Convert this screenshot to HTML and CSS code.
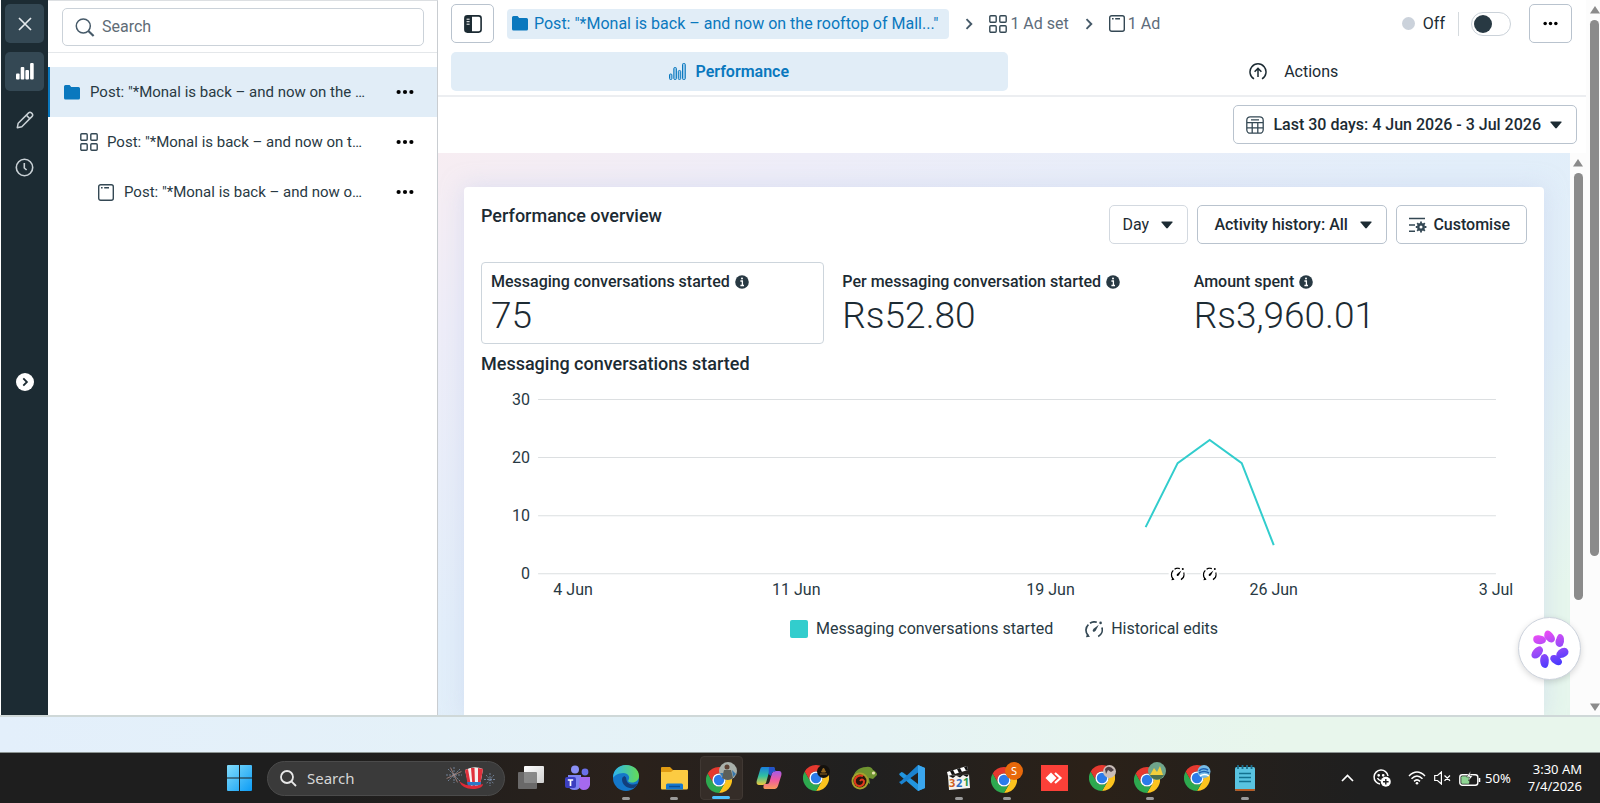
FILE: index.html
```html
<!DOCTYPE html>
<html lang="en">
<head>
<meta charset="utf-8">
<title>Ads Manager – Performance</title>
<link rel="stylesheet" href="styles.css">
</head>
<body>
<svg class="defs" aria-hidden="true">
  <symbol id="i-dots" viewBox="0 0 18 6"><circle cx="2.6" cy="3" r="2.1"/><circle cx="9" cy="3" r="2.1"/><circle cx="15.4" cy="3" r="2.1"/></symbol>
  <symbol id="i-folder" viewBox="0 0 16 15"><path d="M1.5 0H5.6L7.2 2H14.5Q16 2 16 3.5V13Q16 14.5 14.5 14.5H1.5Q0 14.5 0 13V1.5Q0 0 1.5 0z" fill="currentColor"/></symbol>
  <symbol id="i-grid" viewBox="0 0 18 18"><g fill="none" stroke="currentColor" stroke-width="1.4"><rect x=".8" y=".8" width="6.4" height="6.4" rx="1"/><rect x="10.8" y=".8" width="6.4" height="6.4" rx="1"/><rect x=".8" y="10.8" width="6.4" height="6.4" rx="1"/><rect x="10.8" y="10.8" width="6.4" height="6.4" rx="1"/></g></symbol>
  <symbol id="i-ad" viewBox="0 0 16 17"><rect x=".7" y=".7" width="14.6" height="15.6" rx="2" fill="none" stroke="currentColor" stroke-width="1.4"/><path d="M3 3.8H4.6M6.2 3.8H11" stroke="currentColor" stroke-width="1.5"/></symbol>
  <symbol id="i-caret" viewBox="0 0 12 8"><path d="M1 .5H11Q12 .5 11.4 1.4L6.8 7Q6 7.8 5.2 7L.6 1.4Q0 .5 1 .5z" fill="currentColor"/></symbol>
  <symbol id="i-info" viewBox="0 0 14 14"><circle cx="7" cy="7" r="6.8" fill="#283943"/><path d="M5.4 6H7.4V10.4M5.4 10.5H9" stroke="#fff" stroke-width="1.3" fill="none"/><circle cx="7" cy="3.6" r="1" fill="#fff"/></symbol>
  <symbol id="i-chev" viewBox="0 0 8 12"><path d="M1.5 1.2L6.3 6L1.5 10.8" fill="none" stroke="#465a69" stroke-width="1.9"/></symbol>
  <symbol id="i-edit" viewBox="0 0 18 17"><g fill="none" stroke="currentColor" stroke-width="1.7"><path d="M3.2 14.6A7.6 7.6 0 0 1 3.4 3.6"/><path d="M5 2.2A7.6 7.6 0 0 1 11.8 1.3"/><path d="M16.9 6.4A7.6 7.6 0 0 1 13.2 15.4"/></g><path d="M13.8 3.8L10.8 9.600Q9.400 11.400 8 10.600Q7 9.200 8.600 7.800z" fill="currentColor"/><path d="M1 16.200L2.200 12.200L5 15.800z" fill="currentColor"/><circle cx="15.600" cy="1.900" r="1.300" fill="currentColor"/></symbol>
  <symbol id="i-up" viewBox="0 0 10 8"><path d="M5 0L10 7.5H0z" fill="#8b8b8b"/></symbol>
  <symbol id="i-down" viewBox="0 0 10 8"><path d="M0 .5H10L5 8z" fill="#8b8b8b"/></symbol>
  <symbol id="i-chrome" viewBox="0 0 26 26"><path d="M13 6.5H24.26A13 13 0 0 1 13 26L18.63 16.25A6.5 6.5 0 0 0 13 6.5z" fill="#fcc31e"/><path d="M13 6.5H24.26A13 13 0 0 1 13 26L18.63 16.25A6.5 6.5 0 0 0 13 6.5z" fill="#2da94f" transform="rotate(120 13 13)"/><path d="M13 6.5H24.26A13 13 0 0 1 13 26L18.63 16.25A6.5 6.5 0 0 0 13 6.5z" fill="#e5392f" transform="rotate(240 13 13)"/><circle cx="13" cy="13" r="6.6" fill="#fff"/><circle cx="13" cy="13" r="5.2" fill="#2b7bea"/></symbol>
</svg>

<div class="workspace">
  <nav class="rail" aria-label="Tools">
    <button class="rail-btn on" aria-label="Close"><svg width="16" height="16" viewBox="0 0 16 16"><path d="M2 2L14 14M14 2L2 14" stroke="#e4e9ec" stroke-width="1.7"/></svg></button>
    <button class="rail-btn on" aria-label="Charts"><svg width="18" height="17" viewBox="0 0 18 17"><g fill="#fff"><rect x="0" y="10.5" width="3.6" height="6" rx="1"/><rect x="4.7" y="4" width="3.6" height="12.5" rx="1"/><rect x="9.4" y="7" width="3.6" height="9.5" rx="1"/><rect x="14.1" y="0" width="3.6" height="16.5" rx="1"/></g></svg></button>
    <button class="rail-btn" aria-label="Edit"><svg width="18" height="18" viewBox="0 0 18 18" fill="none" stroke="#c9d1d6" stroke-width="1.5" stroke-linejoin="round"><path d="M1.3 16.7L2.2 12.2L12.6 1.9Q14 .7 15.4 1.9L16.1 2.6Q17.3 4 16.1 5.4L5.8 15.8z"/><path d="M10.4 4.2L13.8 7.6"/></svg></button>
    <button class="rail-btn" aria-label="History"><svg width="19" height="19" viewBox="0 0 19 19" fill="none" stroke="#c9d1d6" stroke-width="1.6"><circle cx="9.5" cy="9.5" r="8.2"/><path d="M9.3 5V10L11.6 12"/></svg></button>
    <button class="expand" aria-label="Expand"><svg width="18" height="18" viewBox="0 0 18 18"><circle cx="9" cy="9" r="9" fill="#fff"/><path d="M7.3 5.4L10.9 9L7.3 12.6" fill="none" stroke="#1c2b33" stroke-width="1.8"/></svg></button>
  </nav>

  <aside class="tree">
    <div class="tree-top">
      <label class="search"><svg width="20" height="19" viewBox="0 0 20 19" fill="none" stroke="#465a69"><circle cx="8.3" cy="8" r="7" stroke-width="1.5"/><path d="M13.4 13L18.6 18" stroke-width="2.2"/></svg><input type="text" placeholder="Search" aria-label="Search"></label>
    </div>
    <ul class="tree-list">
      <li class="node sel"><a href="#"><svg class="blue" width="16" height="15"><use href="#i-folder"/></svg><span>Post: "*Monal is back – and now on the …</span></a><button aria-label="More"><svg width="18" height="6"><use href="#i-dots"/></svg></button></li>
      <li class="node l2"><a href="#"><svg width="18" height="18"><use href="#i-grid"/></svg><span>Post: "*Monal is back – and now on t…</span></a><button aria-label="More"><svg width="18" height="6"><use href="#i-dots"/></svg></button></li>
      <li class="node l3"><a href="#"><svg width="16" height="17"><use href="#i-ad"/></svg><span>Post: "*Monal is back – and now o…</span></a><button aria-label="More"><svg width="18" height="6"><use href="#i-dots"/></svg></button></li>
    </ul>
  </aside>

  <main class="main">
    <header class="top">
      <div class="crumbs-row">
        <button class="btn icon-btn" aria-label="Toggle panel"><svg width="18" height="18" viewBox="0 0 18 18"><rect x=".9" y=".9" width="16.2" height="16.2" rx="2.5" fill="#fff" stroke="#1c2b33" stroke-width="1.6"/><path d="M3 1H8V17H3Q1 17 1 15V3Q1 1 3 1z" fill="#1c2b33"/><path d="M2.6 4.2H5.6M2.6 6.7H5.6M2.6 9.2H5.6" stroke="#fff" stroke-width="1"/></svg></button>
        <nav class="crumbs" aria-label="Breadcrumb">
          <a class="crumb chip" href="#"><svg width="16" height="15"><use href="#i-folder"/></svg>Post: "*Monal is back – and now on the rooftop of Mall..."</a>
          <svg width="8" height="12"><use href="#i-chev"/></svg>
          <a class="crumb" href="#"><svg class="dark" width="18" height="18"><use href="#i-grid"/></svg>1 Ad set</a>
          <svg width="8" height="12"><use href="#i-chev"/></svg>
          <a class="crumb" href="#"><svg class="dark" width="16" height="17"><use href="#i-ad"/></svg>1 Ad</a>
        </nav>
        <div class="status"><i class="dot"></i><label for="onoff">Off</label><i class="sep"></i><input class="toggle" id="onoff" type="checkbox"></div>
        <button class="btn icon-btn" aria-label="More options"><svg width="15" height="5"><use href="#i-dots"/></svg></button>
      </div>
      <div class="tabs" role="tablist">
        <button class="tab active" role="tab" aria-selected="true"><svg width="17" height="17" viewBox="0 0 17 17" fill="#9cc9ea" stroke="#0a78be" stroke-width="1"><rect x=".5" y="11" width="2.4" height="5.5" rx="1"/><rect x="4.8" y="4.5" width="2.6" height="12" rx="1"/><rect x="9.3" y="7.5" width="2.4" height="9" rx="1"/><rect x="13.5" y=".5" width="2.8" height="16" rx="1"/></svg>Performance</button>
        <button class="tab" role="tab" aria-selected="false"><svg class="act" width="18" height="17" viewBox="0 0 18 17" fill="none" stroke="#1c2b33" stroke-width="1.5"><path d="M5 15.8A8 8 0 1 1 13 15.8"/><path d="M9 14V5.500M5.6 8.8L9 5.4L12.4 8.8"/></svg>Actions</button>
      </div>
    </header>
    <div class="datebar">
      <button class="btn date"><svg width="18" height="18" viewBox="0 0 18 18" fill="none" stroke="#344854" stroke-width="1.3"><rect x=".8" y=".8" width="16.4" height="16.4" rx="3.5"/><path d="M1 6.6H17M1 11.8H17M6.2 6.6V17M11.8 6.6V17M5 3.8H13"/></svg>Last 30 days: 4 Jun 2026 - 3 Jul 2026<svg width="12" height="8"><use href="#i-caret"/></svg></button>
    </div>
    <div class="body">
      <div class="canvas">
        <section class="card">
          <div class="card-head">
            <h2>Performance overview</h2>
            <label class="btn soft"><select aria-label="Interval"><option>Day</option></select><svg width="12" height="8"><use href="#i-caret"/></svg></label>
            <label class="btn wide"><select aria-label="Activity history"><option>Activity history: All</option></select><svg width="12" height="8"><use href="#i-caret"/></svg></label>
            <button class="btn cust"><svg width="18" height="16" viewBox="0 0 18 16" fill="none" stroke="#344854" stroke-width="1.5"><path d="M0 1.5H16M0 8H6M0 14.3H6"/><circle cx="12" cy="10" r="2.7" stroke-width="2.4"/><path d="M12 4.6V6.6M12 13.4V15.4M6.8 10H8.6M15.4 10H17.4M8.2 6.2L9.6 7.6M14.4 12.4L15.8 13.8M15.8 6.2L14.4 7.6M9.6 12.4L8.2 13.8" stroke-width="1.8"/></svg>Customise</button>
          </div>
          <div class="metrics">
            <div class="metric picked"><h3>Messaging conversations started<svg width="14" height="14"><use href="#i-info"/></svg></h3><p>75</p></div>
            <div class="metric"><h3>Per messaging conversation started<svg width="14" height="14"><use href="#i-info"/></svg></h3><p>Rs52.80</p></div>
            <div class="metric"><h3>Amount spent<svg width="14" height="14"><use href="#i-info"/></svg></h3><p>Rs3,960.01</p></div>
          </div>
          <h2 class="chart-title">Messaging conversations started</h2>
          <svg class="chart" viewBox="0 0 1045 226" role="img" aria-label="Messaging conversations started per day">
            <path d="M57 24.5H1014M57 82.5H1014M57 140.5H1014M57 198.5H1014" stroke="#dcdfe1"/>
            <g text-anchor="end"><text x="49" y="30">30</text><text x="49" y="88">20</text><text x="49" y="146">10</text><text x="49" y="204">0</text></g>
            <g text-anchor="middle"><text x="92" y="220">4 Jun</text><text x="315" y="220">11 Jun</text><text x="569" y="220">19 Jun</text><text x="792" y="220">26 Jun</text><text x="1014" y="220">3 Jul</text></g>
            <polyline points="664,152 696,88 728,65 760,88 792,170" fill="none" stroke="#32cdcd" stroke-width="2"/>
            <g color="#000"><rect x="687" y="190" width="18" height="16" fill="#fff"/><rect x="719" y="190" width="18" height="16" fill="#fff"/><use href="#i-edit" x="689" y="192" width="14" height="14"/><use href="#i-edit" x="721" y="192" width="14" height="14"/></g>
          </svg>
          <div class="legend"><span><i class="swatch"></i>Messaging conversations started</span><span><svg class="dark" width="18" height="17"><use href="#i-edit"/></svg>Historical edits</span></div>
        </section>
      </div>
      <div class="scroll inner"><svg width="10" height="8"><use href="#i-up"/></svg><i></i></div>
    </div>
  </main>
  <div class="scroll outer"><svg width="10" height="8"><use href="#i-up"/></svg><i></i><svg width="10" height="8"><use href="#i-down"/></svg></div>
  <button class="fab" aria-label="Assistant"><svg width="38" height="38" viewBox="-19 -19 38 38"><defs><linearGradient id="pet" gradientUnits="userSpaceOnUse" x1="-6" y1="-18" x2="6" y2="18"><stop offset="0" stop-color="#f04cf5"/><stop offset=".5" stop-color="#9a4bf8"/><stop offset="1" stop-color="#4038ff"/></linearGradient></defs><g fill="url(#pet)" stroke="url(#pet)" stroke-width="1.6" stroke-linejoin="round"><path d="M-4-17C-1-20 5-12 4-9C2-5-4-9-5-13Q-5-16-4-17z"/><path d="M9-14C14-15 14-7 12-4C8-1 5-5 7-10Q8-13 9-14z"/><path d="M17 1C20 5 13 9 9 8C5 6 8 2 12 0Q16-1 17 1z"/><path d="M11 14C9 18 2 13 1 10C1 6 6 6 9 9Q12 12 11 14z"/><path d="M-4 18C-9 19-10 11-8 7C-5 4-2 7-2 11Q-2 17-4 18z"/><path d="M-17 8C-20 4-13-2-10-2C-6 0-8 4-11 7Q-15 10-17 8z"/><path d="M-16-10C-16-15-7-13-5-10C-4-6-9-5-13-6Q-16-7-16-10z"/></g></svg></button>
</div>
<div class="strip"></div>

<footer class="taskbar">
  <button class="start" aria-label="Start"><svg width="25" height="26" viewBox="0 0 25 26"><defs><linearGradient id="win" x1="0" y1="0" x2="1" y2="1" gradientUnits="objectBoundingBox"><stop offset="0" stop-color="#82dcfb"/><stop offset="1" stop-color="#0c9cf5"/></linearGradient></defs><path d="M0 1Q0 0 1 0H12V12.4H0zM13 0H24Q25 0 25 1V12.4H13zM0 13.5H12V26H1Q0 26 0 25zM13 13.5H25V25Q25 26 24 26H13z" fill="url(#win)"/></svg></button>
  <label class="tsearch"><svg width="17" height="17" viewBox="0 0 17 17" fill="none" stroke="#e8e8e8" stroke-width="1.8"><circle cx="7" cy="7" r="6"/><path d="M11.4 11.4L16 16"/></svg><input type="text" placeholder="Search" aria-label="Taskbar search">
    <svg width="52" height="24" viewBox="0 0 52 24"><g stroke-width=".8" stroke="#7f93ae"><path d="M9 1V17M1 9H17M3 3L15 15M15 3L3 15" stroke-dasharray="2 1"/><path d="M5.500 1.600L12.500 16.400M1.600 12.500L16.400 5.500" stroke="#b08c84"/><path d="M45 7V20M39 13.500H51M41 9L49 18M49 9L41 18" stroke-dasharray="2 1"/></g><path d="M20 4Q29-1 38 3L35 20H24z" fill="#f4f0f0"/><path d="M20 4L23 3L26 20H23zM26 2H29.500L30 20H27.500zM33 2L38 3L35 20H33z" fill="#e0313c"/><path d="M22 16H36L35.500 19.500H23z" fill="#2b78c5"/><path d="M14 15Q24 23 38 18Q38 22 30 23Q18 24 14 15z" fill="#e02a37"/></svg></label>
  <div class="apps">
    <button aria-label="Task view"><svg width="26" height="26" viewBox="0 0 26 26"><defs><linearGradient id="tv" x1="0" x2="1" y1="0" y2="1"><stop offset="0" stop-color="#fff"/><stop offset="1" stop-color="#cfcfcf"/></linearGradient></defs><rect x="6" y="1" width="20" height="17" rx="1" fill="url(#tv)"/><rect x="0" y="7" width="19" height="17" rx="1" fill="#777" opacity=".85"/></svg></button>
    <button aria-label="Teams"><svg width="26" height="26" viewBox="0 0 26 26"><circle cx="10" cy="4.500" r="4" fill="#8a8ff5"/><circle cx="20" cy="7" r="3.400" fill="#6a70e8"/><path d="M3 10H16V20Q15 25 9.500 25Q4 25 3 20z" fill="#7d83f2"/><path d="M15 12H25V20Q24 25 18.500 25Q15 25 14 21z" fill="#a569ee"/><rect x="0" y="12" width="11" height="11" rx="2" fill="#3b3fc0"/><path d="M2.800 15H8.200M5.500 15V21" stroke="#fff" stroke-width="1.700"/></svg></button>
    <button class="run" aria-label="Edge"><svg width="26" height="26" viewBox="0 0 26 26"><defs><linearGradient id="ed" x1="0" x2="1"><stop offset="0" stop-color="#2cb4f0"/><stop offset="1" stop-color="#65db55"/></linearGradient></defs><circle cx="13" cy="13" r="13" fill="#1477c9"/><path d="M0 13C0 5 6 0 13 0C21 0 26 5 26 11C26 15 23 17.500 19 17.500C16 17.500 14.500 16.500 15.500 15C17.500 12 15 8 10.500 8C5 8 1 11 0 13z" fill="url(#ed)"/><path d="M9 14C9 20 14 24 21 23Q24 21 24.500 18.500C20 21 14 19 13.500 15Q13.500 12 11.500 11Q9 12 9 14z" fill="#123f7c"/></svg></button>
    <button class="run" aria-label="File Explorer"><svg width="28" height="26" viewBox="0 0 28 26"><path d="M1 3Q1 2 2 2H10L13 5H26V12H1z" fill="#e09b12"/><path d="M1 7H11L13.500 5H27Q28 5 28 6V23Q28 24.500 26.500 24.500H2Q1 24.500 1 23z" fill="#fccb42"/><path d="M6 24.500V20Q6 18.500 7.500 18.500H21.500Q23 18.500 23 20V24.500z" fill="#1678cf"/><path d="M9 21.500H20" stroke="#0c4f93" stroke-width="1.500"/></svg></button>
    <button class="run now" aria-label="Chrome, profile 1"><svg width="32" height="32" viewBox="0 0 32 32"><use href="#i-chrome" x="1" y="5" width="26" height="26"/><circle cx="23" cy="9" r="9" fill="#a9b0aa"/><circle cx="22" cy="5" r="2.500" fill="#5e4234"/><path d="M17 16L19 8H26L28 16Q23 20 17 16z" fill="#5d5f58"/><path d="M15 11H18V16zM27 8L31 12L28 15z" fill="#3977aa"/></svg></button>
    <button aria-label="Copilot"><svg width="26" height="24" viewBox="0 0 26 24"><defs><linearGradient id="c1" x1="0" x2="0" y1="0" y2="1"><stop offset="0" stop-color="#1a7fe0"/><stop offset=".5" stop-color="#2fc0a0"/><stop offset="1" stop-color="#f0c93a"/></linearGradient><linearGradient id="c2" x1="0" x2="0" y1="0" y2="1"><stop offset="0" stop-color="#a45be8"/><stop offset=".5" stop-color="#ee5aa0"/><stop offset="1" stop-color="#f79a5a"/></linearGradient></defs><path d="M6 1H17Q19 1 18.500 3L18 6H15Q13 6 12.500 8L10 17Q9 19 7 19H3Q0 19 .7 15L4 4Q4.500 1 6 1z" fill="url(#c1)"/><path d="M20 5H23Q26 5 25.400 9L22 20Q21 23 19 23H9Q7 23 7.500 20L8 18H11Q13 18 13.500 16L16 7Q17 5 20 5z" fill="url(#c2)"/><path d="M13 1H17Q19 1 19 4L20 5Q17 5 16 7L15 10L12.500 8z" fill="#2452c8"/></svg></button>
    <button aria-label="Chrome, profile 2"><svg width="27" height="26" viewBox="0 0 27 26"><use href="#i-chrome" width="26" height="26"/><circle cx="20.500" cy="6.500" r="6.500" fill="#14110d"/><path d="M17 9H24M18.500 7L20.500 3L22.500 7z" stroke="#94661f" fill="#94661f"/></svg></button>
    <button aria-label="Chameleon"><svg width="27" height="24" viewBox="0 0 27 24"><path d="M2 14C2 6 8 1 15 1Q20 0 22 4Q26 6 26 9L22 13L18 12L19 18Q15 16 16 12z" fill="#6f9430"/><circle cx="9" cy="15" r="8.500" fill="#a8a02c"/><circle cx="9" cy="15" r="6.500" fill="#2a150c"/><path d="M9 15Q11 12 13 15Q13 20 8 20Q3 19 4 13Q7 8 12 10" fill="none" stroke="#e23a1c" stroke-width="2"/><circle cx="22.500" cy="7" r="1.600" fill="#e8e3b0"/></svg></button>
    <button aria-label="Visual Studio Code"><svg width="26" height="26" viewBox="0 0 26 26"><path d="M19 0L26 3V23L19 26L1 10.500L0 9L2.500 7L4 7.500L19 19z" fill="#2195df"/><path d="M19 0L2 16L0 17L2.500 19.500L4 18.500L19 7.500z" fill="#1b83d0"/><path d="M19 0L26 3V23L19 26z" fill="#3aa6ee"/></svg></button>
    <button class="run" aria-label="Media Player Classic"><svg width="24" height="26" viewBox="0 0 24 26"><path d="M0 7L20 1L21 5L1 11z" fill="#fff"/><path d="M3 6L6 5L8 9L5 10zM10 4L13 3L15 7L12 8zM17 2L20 1L21 5L19 5.500z" fill="#111"/><path d="M1 11L22 9.500L23 23L2 25z" fill="#f5f3ef"/><path d="M2 11L6 13L9 10.500L13 12.500L16 10L20 12L22 9.500z" fill="#111"/><text x="2" y="22" font-size="11" font-weight="700" fill="#d05f22">3</text><text x="9" y="22" font-size="11" font-weight="700" fill="#2b6fc4">2</text><text x="16" y="21" font-size="11" font-weight="700" fill="#2b9a46">1</text></svg></button>
    <button class="run" aria-label="Chrome, profile S"><svg width="32" height="32" viewBox="0 0 32 32"><use href="#i-chrome" y="5" width="26" height="26"/><circle cx="23" cy="9" r="9" fill="#e8690b"/><text x="23" y="13" font-size="11" text-anchor="middle" fill="#fff">S</text></svg></button>
    <button aria-label="AnyDesk"><svg width="27" height="26" viewBox="0 0 27 26"><rect width="27" height="26" fill="#fb4038"/><path d="M4.500 13L10 7.500L15.500 13L10 18.500z" fill="#fff"/><path d="M14 8L19.500 13L14 18" stroke="#fff" stroke-width="2.200" fill="none"/></svg></button>
    <button aria-label="Chrome, profile 3"><svg width="27" height="26" viewBox="0 0 27 26"><use href="#i-chrome" width="26" height="26"/><circle cx="20.500" cy="6.500" r="6.500" fill="#c9bdb9"/><path d="M16 4Q20-1 25 5L22 7L19 5L17 9z" fill="#4c4044"/></svg></button>
    <button class="run" aria-label="Chrome, profile 4"><svg width="32" height="32" viewBox="0 0 32 32"><use href="#i-chrome" y="5" width="26" height="26"/><circle cx="23" cy="9" r="9" fill="#6fa58c"/><path d="M16 13L20 6L23 10L26 4L29 13z" fill="#f2cf3c"/><path d="M16 13H30Q27 18 22 17.500Q18 17 16 13z" fill="#4a6f50"/></svg></button>
    <button aria-label="Chrome, profile 5"><svg width="27" height="26" viewBox="0 0 27 26"><use href="#i-chrome" width="26" height="26"/><circle cx="20" cy="6.500" r="6.500" fill="#78bce6"/><path d="M15 6Q18 2 24 5M15 8Q20 5 25 8" stroke="#1d63b5" stroke-width="1.600" fill="none"/><path d="M16 11Q21 8 25 11" stroke="#fff" stroke-width="1.500" fill="none"/></svg></button>
    <button class="run" aria-label="Notepad"><svg width="20" height="26" viewBox="0 0 20 26"><rect x="0" y="2" width="20" height="24" rx="1.500" fill="#59c3e0"/><path d="M0 24H20V24.500Q20 26 18.500 26H1.500Q0 26 0 24.500z" fill="#b55a24"/><path d="M3 0V4M7.500 0V4M12 0V4M16.500 0V4" stroke="#1c6e8c" stroke-width="1.800"/><path d="M4 8.500H16M4 12.500H16M4 16.500H16" stroke="#13718f" stroke-width="1.700"/></svg></button>
  </div>
  <div class="tray">
    <button aria-label="Hidden icons"><svg width="13" height="8" viewBox="0 0 13 8"><path d="M1 7L6.500 1.500L12 7" fill="none" stroke="#fff" stroke-width="1.700"/></svg></button>
    <button class="pal" aria-label="Emoji"><svg width="18" height="18" viewBox="0 0 18 18" fill="none" stroke="#fff" stroke-width="1.500"><path d="M7 15A7 7 0 1 1 15 7"/><path d="M4.500 9Q6 12 8 11.500"/><circle cx="5.700" cy="6.300" r=".6" fill="#fff"/><circle cx="10.200" cy="6.300" r=".6" fill="#fff"/><circle cx="12.800" cy="12.800" r="5" fill="#fff" stroke="none"/><path d="M12.800 10V15.600M10 12.800H15.600" stroke="#222" stroke-width="1.400"/></svg></button>
    <button class="sys" aria-label="Network, volume, battery"><svg width="18" height="14" viewBox="0 0 18 14" fill="none" stroke="#fff" stroke-width="1.500"><path d="M1 5Q9-3 17 5M3.500 7.800Q9 2.300 14.500 7.800M6 10.400Q9 7.400 12 10.400"/><circle cx="9" cy="12.200" r="1.300" fill="#fff" stroke="none"/></svg><svg width="17" height="14" viewBox="0 0 17 14" fill="none" stroke="#fff" stroke-width="1.200"><path d="M.7 4.500H3.500L7.400 1V13L3.500 9.500H.7zM10.500 4.500L16 9.800M16 4.500L10.500 9.800"/></svg><svg width="22" height="15" viewBox="0 0 22 15"><rect x=".8" y="3.800" width="18" height="10.400" rx="2.500" fill="none" stroke="#fff" stroke-width="1.400"/><path d="M20.500 7V11" stroke="#fff" stroke-width="1.600"/><rect x="2.300" y="5.300" width="8" height="7.400" rx="1" fill="#8fd694"/><path d="M11.500 0L7.500 6H10.500L9.500 10L14 4.500H11z" fill="#fff" stroke="#222" stroke-width=".5"/></svg><span>50%</span></button>
    <button class="clock"><span>3:30 AM</span><span>7/4/2026</span></button>
  </div>
</footer>
</body>
</html>
```
FILE: styles.css
```css
* { box-sizing: border-box; }
body {
  margin: 0;
  height: 100vh;
  display: flex;
  flex-direction: column;
  overflow: hidden;
  font-family: Roboto, "Liberation Sans", sans-serif;
  font-size: 16px;
  line-height: 20px;
  color: #1c2b33;
  background: #fff;
}
button, input, select { font: inherit; color: inherit; }
button { border: 0; padding: 0; background: none; display: flex; align-items: center; justify-content: center; }
a { color: inherit; text-decoration: none; }
h2, h3, p, ul { margin: 0; padding: 0; }
svg { flex: none; display: block; }
.defs { position: absolute; width: 0; height: 0; }

.workspace { flex: 1; min-height: 0; display: flex; position: relative; padding-left: 1px; border-bottom: 2px solid #cfd8d8; }

.rail { width: 47px; flex: none; background: #1c2b33; display: flex; flex-direction: column; align-items: center; gap: 9px; padding-top: 4px; }
.rail-btn { width: 39px; height: 39px; border-radius: 5px; }
.rail-btn.on { background: #344854; }
.expand { margin-top: 177px; }

.tree { width: 390px; flex: none; border-right: 1px solid #c9cdd1; border-top: 1px solid #dcdfe2; }
.tree-top { padding: 7px 13px 6px 14px; border-bottom: 1px solid #e4e7ea; }
.search { display: flex; align-items: center; gap: 7px; height: 38px; padding: 0 12px; border: 1px solid #cbd2d9; border-radius: 5px; }
.search input { flex: 1; min-width: 0; border: 0; outline: 0; padding: 0; background: none; }
.search input::placeholder { color: #606c76; opacity: 1; }
.tree-list { list-style: none; padding-top: 14px; }
.node { display: flex; align-items: center; height: 50px; padding: 0 23px 0 14px; border-left: 2px solid transparent; }
.node a { flex: 1; display: flex; align-items: center; gap: 10px; white-space: nowrap; color: #283943; font-size: 15px; line-height: 22px; }
.node button { color: #283943; }
.node a svg { color: #344854; }
.node.sel { background: #e1edf7; border-left-color: #0a78be; }
.node a .blue, .blue { color: #0a78be; }
.l2 { padding-left: 30px; }
.l2 a { gap: 9px; }
.l3 { padding-left: 48px; }

.main { flex: 1; min-width: 0; display: flex; flex-direction: column; }
.top { padding: 4px 14px 4px 13px; border-bottom: 2px solid #eceef1; }
.crumbs-row { display: flex; align-items: center; }
.btn { height: 39px; border: 1px solid #b9c3ce; border-radius: 5px; background: #fff; display: flex; align-items: center; color: #1c2b33; white-space: nowrap; }
.icon-btn { width: 43px; flex: none; }
.crumbs { flex: 1; display: flex; align-items: center; margin-left: 13px; gap: 16px; color: #5d6c7b; white-space: nowrap; }
.crumb { display: flex; align-items: center; gap: 3px; }
.chip { height: 30px; padding: 0 11px 0 5px; gap: 6px; background: #e1edf7; border-radius: 4px; color: #0a78be; }
.dark { color: #344854; }
.status { display: flex; align-items: center; margin-right: 18px; }
.dot { width: 13px; height: 13px; border-radius: 50%; background: #cbd2db; margin-right: 8px; }
.sep { width: 1px; height: 24px; background: #d5dade; margin: 0 12px 0 13px; }
.toggle { appearance: none; margin: 0; width: 40px; height: 24px; border: 1px solid #cbd2d9; border-radius: 12px; background: #fff; display: flex; align-items: center; padding: 0 2px; }
.toggle::before { content: ""; width: 18px; height: 18px; border-radius: 50%; background: #283943; }
.tabs { display: grid; grid-template-columns: 1fr 1fr; gap: 8px; margin-top: 9px; }
.tab { height: 39px; gap: 9px; border-radius: 5px; }
.tab.active { background: #e1edf7; color: #0a78be; font-weight: 600; }
.act { margin-right: 8px; }
.datebar { display: flex; justify-content: flex-end; padding: 8px 9px 9px; }
.date { gap: 9px; padding: 0 14px 0 12px; font-weight: 500; }

.body { flex: 1; min-height: 0; display: flex; }
.canvas { flex: 1; min-width: 0; overflow: hidden; padding: 34px 26px 0; display: flex; flex-direction: column; background: linear-gradient(155deg, #f7edf2 0%, #eeedf8 16%, #e2eefa 45%, #e1eff8 65%, #e6f6ed 88%); }
.card { flex: 1; min-height: 0; background: #fff; border-radius: 4px 4px 0 0; padding: 18px 17px 0; box-shadow: 0 0 22px rgba(195, 205, 235, .5); }
.card-head { display: flex; align-items: center; gap: 9px; }
.card-head h2 { flex: 1; align-self: flex-start; }
h2 { font-size: 18px; line-height: 22px; font-weight: 500; }
.btn select { appearance: none; border: 0; outline: 0; padding: 0; background: none; font-weight: 500; }
.soft { border-color: #d3d9e0; padding: 0 14px 0 12px; gap: 12px; }
.soft select { font-weight: 400; }
.wide { padding: 0 14px 0 16px; gap: 12px; }
.cust { padding: 0 16px 0 12px; gap: 6px; font-weight: 500; }
.metrics { display: grid; grid-template-columns: repeat(3, 1fr); gap: 8px; margin-top: 18px; }
.metric { border: 1px solid transparent; border-radius: 4px; padding: 9px 9px 8px; height: 82px; }
.picked { border-color: #cdd5dc; }
h3 { display: flex; align-items: center; gap: 5px; font-size: 16px; line-height: 20px; font-weight: 500; white-space: nowrap; }
.metric p { font-size: 37px; line-height: 44px; font-weight: 300; margin-top: 2px; }
.chart-title { margin-top: 9px; }
.chart { width: 100%; height: auto; }
.chart text { font-size: 16px; fill: #283943; }
.legend { display: flex; justify-content: center; gap: 32px; margin-top: 18px; color: #283943; }
.legend span { display: flex; align-items: center; gap: 8px; }
.swatch { width: 18px; height: 18px; border-radius: 2px; background: #32cdcd; }

.scroll { flex: none; display: flex; flex-direction: column; align-items: center; background: #fcfcfc; }
.scroll i { width: 9px; border-radius: 5px; background: #8b8b8b; }
.inner { width: 16px; padding-top: 6px; }
.inner i { margin-top: 6px; flex: 0 1 427px; }
.outer { width: 14px; padding: 6px 0 4px 3px; }
.outer i { margin: 6px 0 auto; flex: 0 1 536px; }
.fab { position: absolute; right: 19px; bottom: 35px; width: 63px; height: 63px; border-radius: 50%; background: #fff; border: 1px solid #cdd3dd; box-shadow: 0 2px 6px rgba(0, 0, 0, .15); }

.strip { flex: none; height: 35px; background: linear-gradient(90deg, #e3effb, #e6f3f5 55%, #e8f6ec 80%); }

.taskbar { flex: none; height: 51px; display: flex; align-items: center; padding: 0 18px 0 216px; border-top: 1px solid #8c9492; background: linear-gradient(90deg, #1e1e1e 20%, #2a211b 40%, #202020 54%, #2b2118 68%, #1f1f1f 85%); color: #fff; font-family: "Noto Sans", sans-serif; }
.start { width: 46px; }
.tsearch { margin-left: 5px; width: 238px; height: 35px; border-radius: 18px; border: 1px solid #4b4b4b; background: #3a3a3a; display: flex; align-items: center; padding: 0 7px 0 12px; gap: 10px; }
.tsearch input { flex: 1; min-width: 0; border: 0; padding: 0; outline: 0; background: none; font-size: 15px; }
.tsearch input::placeholder { color: #d6d6d6; opacity: 1; }
.apps { flex: 0 1 762px; display: grid; grid-template-columns: repeat(16, 1fr); margin-left: 2px; align-self: stretch; align-items: center; }
.apps button { position: relative; height: 44px; margin: 0 2px; border-radius: 4px; }
.apps .run::after { content: ""; position: absolute; bottom: 0; left: calc(50% - 4px); width: 8px; height: 3px; border-radius: 2px; background: #9a9a9a; }
.apps .now { background: #352d28; border: 1px solid #403833; }
.apps .now::after { left: calc(50% - 9px); width: 18px; background: #4cc2ff; }
.tray { margin-left: auto; display: flex; align-items: center; font-size: 12px; line-height: 17px; }
.pal { margin-left: 19px; }
.sys { margin-left: 17px; gap: 8px; font-size: 13px; }
.sys span { margin-left: -4px; }
.clock { margin-left: 17px; flex-direction: column; align-items: flex-end; font-size: 13px; }
```
